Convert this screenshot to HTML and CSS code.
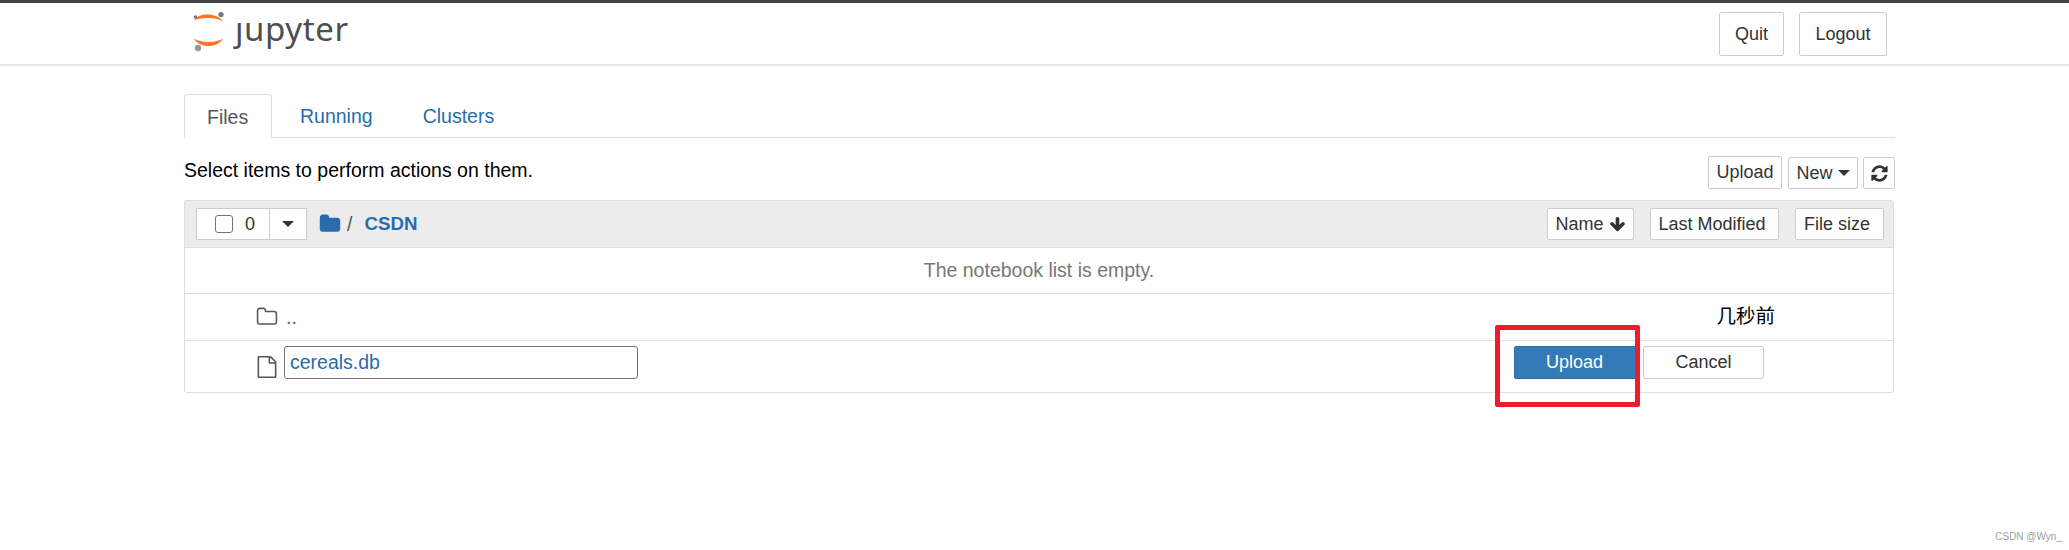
FILE: index.html
```html
<!DOCTYPE html>
<html lang="en">
<head>
    <meta charset="UTF-8">
    <title>Home - Jupyter</title>
    <link rel="stylesheet" href="styles.css">
</head>
<body>
    <header class="topbar">
        <div class="logo">
            <svg class="logo-mark" width="34" height="42" viewBox="0 0 34 42">
                <circle cx="29" cy="4.500" r="2.600" fill="#767677"/>
                <circle cx="3.500" cy="7" r="1.800" fill="#767677"/>
                <circle cx="6" cy="38" r="3.200" fill="#989798"/>
                <path d="M2 10.500C7 2.500 25 2.500 31 11.500C25 7 8 7 2 10.500Z" fill="#f37726"/>
                <path d="M2 28.500C8 33 25 33 31 28.500C26 38.500 7 38.500 2 28.500Z" fill="#f37726"/>
            </svg>
            <span class="logo-text">ȷupyter</span>
        </div>
        <div class="topbar-btns">
            <a class="btn btn-top btn-quit">Quit</a>
            <a class="btn btn-top btn-logout">Logout</a>
        </div>
    </header>

    <main class="container">
        <ul class="tabs">
            <li class="tab active">Files</li>
            <li class="tab">Running</li>
            <li class="tab">Clusters</li>
        </ul>

        <div class="toolbar">
            <span class="hint">Select items to perform actions on them.</span>
            <div class="toolbar-btns">
                <a class="btn btn-upload">Upload</a>
                <a class="btn btn-new">New <i class="caret"></i></a>
                <a class="btn btn-refresh">
                    <svg width="19" height="19" viewBox="0 0 1792 1792"><path fill="#333" d="M1639 1056q0 5-1 7-64 268-268 434.500t-478 166.500q-146 0-282.500-55t-243.500-157l-129 129q-19 19-45 19t-45-19-19-45v-448q0-26 19-45t45-19h448q26 0 45 19t19 45-19 45l-137 137q71 66 161 102t187 36q134 0 250-65t186-179q11-17 53-117 8-23 30-23h192q13 0 22.500 9.500t9.500 22.500zm25-800v448q0 26-19 45t-45 19h-448q-26 0-45-19t-19-45 19-45l138-138q-148-137-349-137-134 0-250 65t-186 179q-11 17-53 117-8 23-30 23h-199q-13 0-22.500-9.500t-9.500-22.500v-7q65-268 270-434.500t480-166.500q146 0 284 55.500t245 156.500l130-129q19-19 45-19t45 19 19 45z"/></svg>
                </a>
            </div>
        </div>

        <section class="list">
            <div class="list-head">
                <div class="select-group">
                    <label class="select-check"><i class="checkbox"></i><span>0</span></label>
                    <span class="select-caret"><i class="caret"></i></span>
                </div>
                <svg class="crumb-icon" width="22" height="22" viewBox="0 0 1792 1792"><path fill="#2a6cab" d="M1728 608v704q0 92-66 158t-158 66h-1216q-92 0-158-66t-66-158v-960q0-92 66-158t158-66h320q92 0 158 66t66 158v32h672q92 0 158 66t66 158z"/></svg>
                <span class="crumb-sep">/</span>
                <a class="crumb-link">CSDN</a>
                <div class="sort-btns">
                    <a class="btn btn-sort btn-name">Name
                        <svg width="17" height="17" viewBox="0 0 1792 1792"><path fill="#333" d="M1675 832q0 53-37 90l-651 652q-39 37-91 37-53 0-90-37l-651-652q-38-36-38-90 0-53 38-91l74-75q39-37 91-37 53 0 90 37l294 294v-704q0-52 38-90t90-38h128q52 0 90 38t38 90v704l294-294q37-37 90-37 52 0 91 37l75 75q37 39 37 91z"/></svg>
                    </a>
                    <a class="btn btn-sort btn-modified">Last Modified</a>
                    <a class="btn btn-sort btn-size">File size</a>
                </div>
            </div>
            <div class="row row-empty">The notebook list is empty.</div>
            <div class="row row-parent">
                <svg class="row-icon" width="22" height="22" viewBox="0 0 1792 1792"><path fill="#555" d="M1600 1312v-704q0-40-28-68t-68-28h-704q-40 0-68-28t-28-68v-64q0-40-28-68t-68-28h-320q-40 0-68 28t-28 68v960q0 40 28 68t68 28h1216q40 0 68-28t28-68zm128-704v704q0 92-66 158t-158 66h-1216q-92 0-158-66t-66-158v-960q0-92 66-158t158-66h320q92 0 158 66t66 158v32h672q92 0 158 66t66 158z"/></svg>
                <a class="row-link">..</a>
                <span class="row-time">几秒前</span>
            </div>
            <div class="row row-upload">
                <svg class="row-icon file-icon" width="22" height="22" viewBox="0 0 1792 1792"><path fill="#555" d="M1596 380q28 28 48 76t20 88v1152q0 40-28 68t-68 28h-1344q-40 0-68-28t-28-68v-1600q0-40 28-68t68-28h896q40 0 88 20t76 48zm-444-244v376h376q-10-29-22-41l-313-313q-12-12-41-22zm384 1528v-1024h-416q-40 0-68-28t-28-68v-416h-768v1536h1280z"/></svg>
                <input class="name-input" type="text" value="cereals.db">
                <a class="btn btn-primary">Upload</a>
                <a class="btn btn-cancel">Cancel</a>
            </div>
        </section>
    </main>

    <!-- red box drawn on top of the screenshot -->
    <div class="annotation"></div>
    <span class="watermark">CSDN @Wyn_</span>
</body>
</html>
```

FILE: styles.css
```css
* {
    margin: 0;
    padding: 0;
    box-sizing: border-box;
}
html, body {
    height: 550px;
    overflow: hidden;
}
body {
    font-family: "Liberation Sans", Arial, sans-serif;
    font-size: 19.5px;
    color: #000;
    background-color: #fff;
    position: relative;
}
a {
    text-decoration: none;
}
.topbar {
    height: 66px;
    border-top: 3px solid #444;
    border-bottom: 2px solid #e7e7e7;
    display: flex;
    align-items: flex-start;
    justify-content: space-between;
    padding: 0 182px 0 192px;
}
.logo {
    display: flex;
    align-items: center;
    height: 50px;
}
.logo-mark {
    margin-top: 6px;
}
.logo-text {
    font-family: "Noto Sans", sans-serif;
    font-size: 33px;
    color: #4e4e4e;
    margin-left: 9px;
    margin-top: 1px;
    letter-spacing: 0.6px;
}
.topbar-btns {
    display: flex;
    gap: 15px;
    margin-top: 9px;
}
.btn {
    display: flex;
    align-items: center;
    justify-content: center;
    background-color: #fff;
    border: 1px solid #ccc;
    border-radius: 2px;
    color: #333;
    font-size: 18px;
    white-space: nowrap;
}
.btn-top {
    height: 44px;
}
.btn-quit {
    width: 65px;
}
.btn-logout {
    width: 88px;
}
.container {
    margin-left: 184px;
    width: 1711px;
}
.tabs {
    list-style: none;
    display: flex;
    margin-top: 28px;
    height: 44px;
    border-bottom: 1px solid #ddd;
}
.tab {
    height: 44px;
    line-height: 44px;
    padding: 0 22px 0 26px;
    margin-left: 2px;
    color: #2a6cab;
}
.tab.active {
    width: 88px;
    margin-left: 0;
    padding: 0 21px 0 22px;
    color: #555;
    background-color: #fff;
    border: 1px solid #ddd;
    border-bottom-color: #fff;
    border-radius: 3px 3px 0 0;
}
.toolbar {
    display: flex;
    justify-content: space-between;
    margin-top: 17px;
    height: 34px;
}
.hint {
    margin-top: 3px;
    line-height: 24px;
}
.toolbar-btns {
    display: flex;
    align-items: flex-end;
}
.btn-upload {
    width: 74px;
    height: 33px;
    margin-right: 6px;
}
.btn-new {
    width: 70px;
    height: 32px;
    margin-right: 5px;
    gap: 5px;
}
.btn-refresh {
    width: 32px;
    height: 32px;
}
.caret {
    display: inline-block;
    border-top: 6px solid #333;
    border-left: 6px solid transparent;
    border-right: 6px solid transparent;
}
.list {
    margin-top: 11px;
    width: 1710px;
    border: 1px solid #ddd;
    border-radius: 3px;
    height: 193px;
}
.list-head {
    height: 47px;
    background-color: #ececec;
    border-bottom: 1px solid #ddd;
    display: flex;
    align-items: center;
    padding-left: 11px;
}
.select-group {
    display: flex;
    width: 111px;
    height: 32px;
    background-color: #fff;
    border: 1px solid #ccc;
}
.select-check {
    width: 73px;
    display: flex;
    align-items: center;
    justify-content: flex-end;
    gap: 12px;
    padding-right: 14px;
    border-right: 1px solid #ccc;
    color: #333;
    font-size: 18px;
}
.checkbox {
    width: 18px;
    height: 18px;
    border: 1px solid #767676;
    border-radius: 3px;
    background-color: #fff;
}
.select-caret {
    flex: 1;
    display: flex;
    align-items: center;
    justify-content: center;
}
.crumb-icon {
    margin-left: 12px;
    margin-bottom: 1px;
}
.crumb-sep {
    margin-left: 6px;
    color: #555;
}
.crumb-link {
    margin-left: 12px;
    font-size: 18.7px;
    font-weight: bold;
    color: #2a6cab;
}
.sort-btns {
    margin-left: auto;
    display: flex;
    gap: 16px;
    margin-right: 9px;
}
.btn-sort {
    height: 32px;
}
.btn-name {
    width: 87px;
    gap: 5px;
}
.btn-modified {
    width: 129px;
    padding-right: 5px;
}
.btn-size {
    width: 89px;
    padding-right: 5px;
}
.row {
    display: flex;
    align-items: center;
    border-bottom: 1px solid #ddd;
}
.row-empty {
    height: 46px;
    justify-content: center;
    color: #777;
}
.row-parent {
    height: 47px;
    padding-left: 71px;
}
.row-upload {
    height: 51px;
    border-bottom: none;
    padding-left: 71px;
    padding-bottom: 9px;
}
.row-icon {
    flex-shrink: 0;
}
.file-icon {
    margin-top: 9px;
}
.row-link {
    margin-left: 8px;
    color: #2a6cab;
}
.row-time {
    margin-left: auto;
    margin-right: 118px;
    margin-bottom: 6px;
    font-family: "Noto Sans CJK SC", sans-serif;
    font-size: 19.5px;
    color: #000;
}
.name-input {
    width: 354px;
    height: 33px;
    margin-left: 6px;
    padding: 0 5px;
    border: 1px solid #767676;
    border-radius: 3px;
    font-family: inherit;
    font-size: inherit;
    color: #2a6cab;
}
.btn-primary {
    width: 123px;
    height: 33px;
    margin-left: 876px;
    padding-right: 2px;
    background-color: #337ab7;
    border-color: #2e6da4;
    color: #fff;
}
.btn-cancel {
    width: 121px;
    height: 33px;
    margin-left: 6px;
}
.annotation {
    position: absolute;
    left: 1495px;
    top: 325px;
    width: 145px;
    height: 82px;
    border: 5px solid #ee1c2b;
    border-radius: 2px;
}
.watermark {
    position: absolute;
    right: 7px;
    top: 531px;
    font-size: 10px;
    color: #a0a0a0;
}
```
